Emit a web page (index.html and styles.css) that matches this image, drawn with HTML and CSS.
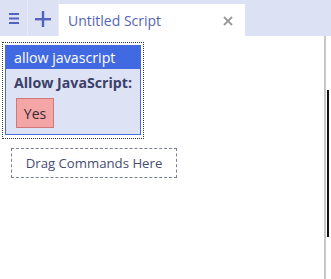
FILE: index.html
```html
<!DOCTYPE html>
<html>
<head>
<meta charset="utf-8">
<link rel="stylesheet" href="styles.css">
</head>
<body>
<div class="topbar">
  <div class="tool menu">
    <svg width="10" height="11" viewBox="0 0 10 11"><rect x="0" y="0" width="10" height="2" fill="#5364c0"/><rect x="0" y="4.5" width="10" height="2" fill="#5364c0"/><rect x="0" y="9" width="10" height="2" fill="#5364c0"/></svg>
  </div>
  <div class="tool plus">
    <svg width="16" height="16" viewBox="0 0 16 16"><rect x="0" y="7" width="16" height="2.4" fill="#5364c0"/><rect x="6.8" y="0" width="2.4" height="16" fill="#5364c0"/></svg>
  </div>
  <div class="tab">
    <span class="tab-title">Untitled Script</span>
    <svg class="close" width="10" height="10" viewBox="0 0 10 10"><path d="M1 1L9 9M9 1L1 9" stroke="#9a9a9a" stroke-width="1.8"/></svg>
  </div>
  <div class="bar-rest"></div>
</div>
<div class="content">
  <div class="canvas">
    <div class="block-wrap">
      <div class="block">
        <div class="block-head">allow javascript</div>
        <div class="block-body">
          <div class="label">Allow JavaScript:</div>
          <div class="yes">Yes</div>
        </div>
      </div>
    </div>
    <div class="drop">Drag Commands Here</div>
  </div>
  <div class="scroll">
    <div class="thumb"></div>
  </div>
</div>
</body>
</html>
```
FILE: styles.css
```css
html, body { margin: 0; padding: 0; }
body {
  width: 331px;
  height: 279px;
  overflow: hidden;
  background: #ffffff;
  font-family: "Open Sans", "Noto Sans", sans-serif;
}
.topbar {
  height: 36px;
  background: #dce2f4;
  display: flex;
  align-items: flex-end;
}
.tool {
  height: 36px;
  display: flex;
  align-items: center;
  justify-content: center;
  border-right: 1px solid #e8ecf8;
  box-sizing: border-box;
}
.menu { width: 28px; padding-top: 1px; }
.plus { width: 31px; padding-top: 2px; }
.tab {
  width: 186px;
  height: 32px;
  background: #ffffff;
  display: flex;
  align-items: center;
  box-sizing: border-box;
  padding: 0 12px 0 9px;
}
.tab-title {
  flex: 1;
  color: #5565b5;
  font-size: 14px;
  padding-top: 1px;
}
.close { margin-top: 1px; }
.bar-rest { flex: 1; }
.content {
  display: flex;
  height: 243px;
}
.canvas {
  flex: 1;
  padding: 6px 0 0 2px;
}
.block-wrap {
  width: 142px;
  border: 1px dotted #333;
  padding: 2px 2px 3px 2px;
  box-sizing: border-box;
}
.block {
  border: 1px solid #4a6ad8;
  background: #dde2f5;
}
.block-head {
  background: #4169e1;
  color: #ffffff;
  height: 23px;
  line-height: 23px;
  font-size: 14.2px;
  padding-left: 8px;
}
.block-body {
  padding: 5px 0 6px 8px;
}
.label {
  font-weight: bold;
  font-size: 14.2px;
  color: #3a4068;
  line-height: 18px;
}
.yes {
  margin: 6px 0 0 2px;
  width: 38px;
  height: 30px;
  box-sizing: border-box;
  background: #f4a5a5;
  border: 1px solid #d07878;
  color: #3a2a30;
  font-size: 14px;
  display: flex;
  align-items: center;
  justify-content: center;
}
.drop {
  margin: 9px 0 0 9px;
  width: 166px;
  height: 30px;
  box-sizing: border-box;
  border: 1px dashed #7a7f98;
  color: #474d70;
  font-size: 13.2px;
  display: flex;
  align-items: center;
  justify-content: center;
}
.scroll {
  border-left: 2px solid #c8c8c8;
  padding-top: 54px;
  box-sizing: border-box;
  width: 7px;
}
.thumb {
  margin-left: 1px;
  width: 2px;
  height: 147px;
  background: #111;
}
```
